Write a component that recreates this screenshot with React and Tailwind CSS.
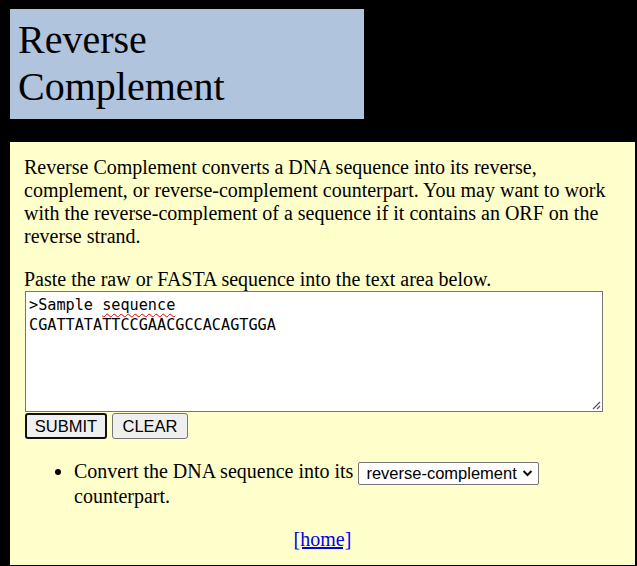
import React from "react";

const serif = { fontFamily: '"Liberation Serif", "Times New Roman", serif' };

const App = () => {
  return (
    <div
      className="min-h-[566px] bg-black pt-[9px] pl-[10px] pr-[2px] text-black"
      style={serif}
    >
      <div className="w-[354px] bg-[#b0c4de] px-[8px] pt-[7px] pb-[9px]">
        <h1 className="text-[40px] leading-[47px] font-normal">
          Reverse
          <br />
          Complement
        </h1>
      </div>

      <div className="mt-[23px] bg-[#ffffcc] pl-[14px] pr-[14px] pt-[14px] pb-[14px] text-[20px] leading-[23px]">
        <p>
          Reverse Complement converts a DNA sequence into its reverse,
          complement, or reverse-complement counterpart. You may want to work
          with the reverse-complement of a sequence if it contains an ORF on the
          reverse strand.
        </p>

        <p className="mt-[20px]">
          Paste the raw or FASTA sequence into the text area below.
        </p>

        <div className="relative ml-px h-[121px] w-[578px] border border-[#767676] bg-white px-[3px] pt-[3px] pb-[2px]">
          <div
            className="whitespace-pre text-[15.2px] leading-[20px]"
            style={{ fontFamily: '"DejaVu Sans Mono", "Liberation Mono", monospace' }}
          >
            {">Sample "}
            <span className="underline decoration-wavy decoration-[#e00000] decoration-1 underline-offset-[3px]">
              sequence
            </span>
            {"\nCGATTATATTCCGAACGCCACAGTGGA"}
          </div>
          <svg
            className="absolute bottom-[1px] right-[1px]"
            width="11"
            height="11"
            viewBox="0 0 11 11"
          >
            <path d="M10 3 L3 10 M10 7 L7 10" stroke="#555" strokeWidth="1.2" />
          </svg>
        </div>

        <div
          className="ml-px mt-px flex gap-[5px] text-[16.5px]"
          style={{ fontFamily: '"Liberation Sans", Arial, sans-serif' }}
        >
          <button className="h-[26px] w-[82px] rounded-[3px] border-2 border-[#101010] bg-[#efefef] leading-none">
            SUBMIT
          </button>
          <button className="h-[26px] w-[76px] rounded-[3px] border border-[#767676] bg-[#efefef] leading-none">
            CLEAR
          </button>
        </div>

        <ul className="mt-[21px] list-disc pl-[50px]">
          <li>
            Convert the DNA sequence into its{" "}
            <span
              className="relative inline-flex h-[23px] w-[181px] items-center rounded-[2px] border border-[#767676] bg-white pl-[7px] align-middle text-[16.5px] leading-none"
              style={{ fontFamily: '"Liberation Sans", Arial, sans-serif' }}
            >
              reverse-complement
              <svg
                className="absolute right-[5px] top-[6px]"
                width="11"
                height="9"
                viewBox="0 0 11 9"
              >
                <path
                  d="M1.5 2 L5.5 6 L9.5 2"
                  fill="none"
                  stroke="#111"
                  strokeWidth="2"
                />
              </svg>
            </span>{" "}
            counterpart.
          </li>
        </ul>

        <p className="mt-[20px] text-center">
          <a href="#" className="text-[#0000ee] underline">
            [home]
          </a>
        </p>
      </div>
    </div>
  );
};

export default App;
